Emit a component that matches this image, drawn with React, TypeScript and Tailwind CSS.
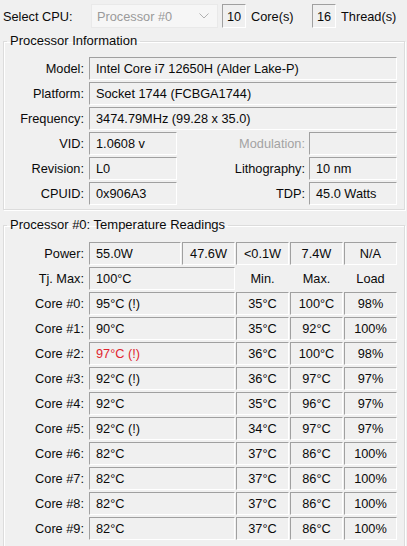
import React from "react";

const sunken = "border-t border-l border-t-[#a0a0a0] border-l-[#a0a0a0] border-b border-r border-b-white border-r-white";

function Box({ w, children, center, red }: { w: string; children?: React.ReactNode; center?: boolean; red?: boolean }) {
  return (
    <div
      className={`${w} h-[23px] shrink-0 flex items-center pt-[2px] ${sunken} ${center ? "justify-center" : "pl-[6px]"} ${red ? "text-[#e0252f]" : ""}`}
    >
      {children}
    </div>
  );
}

function Label({ children, w = "w-[80px]", dim }: { children: React.ReactNode; w?: string; dim?: boolean }) {
  return <div className={`${w} shrink-0 pt-[2px] text-right ${dim ? "text-[#a3a3a3]" : ""}`}>{children}</div>;
}

function Group({ title, children, className = "" }: { title: string; children: React.ReactNode; className?: string }) {
  return (
    <fieldset
      className={`ml-[3px] w-[402px] border border-[#dcdcdc] shadow-[inset_1px_1px_0_#ffffff,1px_1px_0_#ffffff] ${className}`}
    >
      <legend className="ml-[3px] px-[3px] leading-[16px] text-[13px]">{title}</legend>
      {children}
    </fieldset>
  );
}

const cores = [
  { t: "95°C (!)", min: "35°C", max: "100°C", load: "98%" },
  { t: "90°C", min: "35°C", max: "92°C", load: "100%" },
  { t: "97°C (!)", min: "36°C", max: "100°C", load: "98%", red: true },
  { t: "92°C (!)", min: "36°C", max: "97°C", load: "97%" },
  { t: "92°C", min: "35°C", max: "96°C", load: "97%" },
  { t: "92°C (!)", min: "34°C", max: "97°C", load: "97%" },
  { t: "82°C", min: "37°C", max: "86°C", load: "100%" },
  { t: "82°C", min: "37°C", max: "86°C", load: "100%" },
  { t: "82°C", min: "37°C", max: "86°C", load: "100%" },
  { t: "82°C", min: "37°C", max: "86°C", load: "100%" },
];

export default function App() {
  return (
    <div
      className="w-[407px] h-[546px] overflow-hidden bg-[#f0f0f0] text-[12.75px] text-[#0a0a0a] leading-none"
      style={{ fontFamily: '"Liberation Sans", Arial, sans-serif' }}
    >
      {/* CPU selector */}
      <div className="flex items-center h-[24px] mt-[4px]">
        <div className="w-[91px] pl-[3px] pt-[2px] shrink-0">Select CPU:</div>
        <div className="w-[127px] h-[24px] shrink-0 flex items-center justify-between pl-[5px] pr-[8px] bg-[#f6f6f6] border border-[#e9e9e9] text-[#9a9a9a]">
          <span className="pt-[2px]">Processor #0</span>
          <svg width="10" height="6" viewBox="0 0 10 6" fill="none">
            <polyline points="0.5,0.5 5,5 9.5,0.5" stroke="#b0b0b0" strokeWidth="1" />
          </svg>
        </div>
        <div className={`ml-[4px] w-[24px] h-[24px] shrink-0 flex items-center pl-[4px] pt-[2px] ${sunken}`}>10</div>
        <div className="ml-[5px] w-[61px] pt-[2px] shrink-0">Core(s)</div>
        <div className={`w-[24px] h-[24px] shrink-0 flex items-center pl-[4px] pt-[2px] ${sunken}`}>16</div>
        <div className="ml-[5px] pt-[2px]">Thread(s)</div>
      </div>

      {/* Processor information */}
      <Group title="Processor Information" className="mt-[5px] pt-[8px] pb-[4px]">
        <div className="flex flex-col gap-[2px]">
          <div className="flex items-center gap-[5px]">
            <Label>Model:</Label>
            <Box w="w-[308px]">Intel Core i7 12650H (Alder Lake-P)</Box>
          </div>
          <div className="flex items-center gap-[5px]">
            <Label>Platform:</Label>
            <Box w="w-[308px]">Socket 1744 (FCBGA1744)</Box>
          </div>
          <div className="flex items-center gap-[5px]">
            <Label>Frequency:</Label>
            <Box w="w-[308px]">3474.79MHz (99.28 x 35.0)</Box>
          </div>
          <div className="flex items-center">
            <Label>VID:</Label>
            <div className="ml-[5px]"><Box w="w-[88px]">1.0608 v</Box></div>
            <Label w="w-[128px]" dim>Modulation:</Label>
            <div className="ml-[4px]"><Box w="w-[88px]"></Box></div>
          </div>
          <div className="flex items-center">
            <Label>Revision:</Label>
            <div className="ml-[5px]"><Box w="w-[88px]">L0</Box></div>
            <Label w="w-[128px]">Lithography:</Label>
            <div className="ml-[4px]"><Box w="w-[88px]">10 nm</Box></div>
          </div>
          <div className="flex items-center">
            <Label>CPUID:</Label>
            <div className="ml-[5px]"><Box w="w-[88px]">0x906A3</Box></div>
            <Label w="w-[128px]">TDP:</Label>
            <div className="ml-[4px]"><Box w="w-[88px]">45.0 Watts</Box></div>
          </div>
        </div>
      </Group>

      {/* Temperature readings */}
      <Group title="Processor #0: Temperature Readings" className="mt-[7px] pt-[9px] pb-[6px]">
        <div className="flex flex-col gap-[2px]">
          <div className="flex items-center">
            <Label>Power:</Label>
            <div className="ml-[5px] flex gap-[1px]">
              <Box w="w-[92px]">55.0W</Box>
              <Box w="w-[53px]" center>47.6W</Box>
              <Box w="w-[53px]" center>&lt;0.1W</Box>
              <Box w="w-[53px]" center>7.4W</Box>
              <Box w="w-[53px]" center>N/A</Box>
            </div>
          </div>
          <div className="flex items-center">
            <Label>Tj. Max:</Label>
            <div className="ml-[5px] flex gap-[1px]">
              <Box w="w-[146px]">100°C</Box>
              <div className="w-[53px] h-[23px] pt-[2px] flex items-center justify-center">Min.</div>
              <div className="w-[53px] h-[23px] pt-[2px] flex items-center justify-center">Max.</div>
              <div className="w-[53px] h-[23px] pt-[2px] flex items-center justify-center">Load</div>
            </div>
          </div>
          {cores.map((c, i) => (
            <div key={i} className="flex items-center">
              <Label>Core #{i}:</Label>
              <div className="ml-[5px] flex gap-[1px]">
                <Box w="w-[146px]" red={c.red}>{c.t}</Box>
                <Box w="w-[53px]" center>{c.min}</Box>
                <Box w="w-[53px]" center>{c.max}</Box>
                <Box w="w-[53px]" center>{c.load}</Box>
              </div>
            </div>
          ))}
        </div>
      </Group>
    </div>
  );
}
